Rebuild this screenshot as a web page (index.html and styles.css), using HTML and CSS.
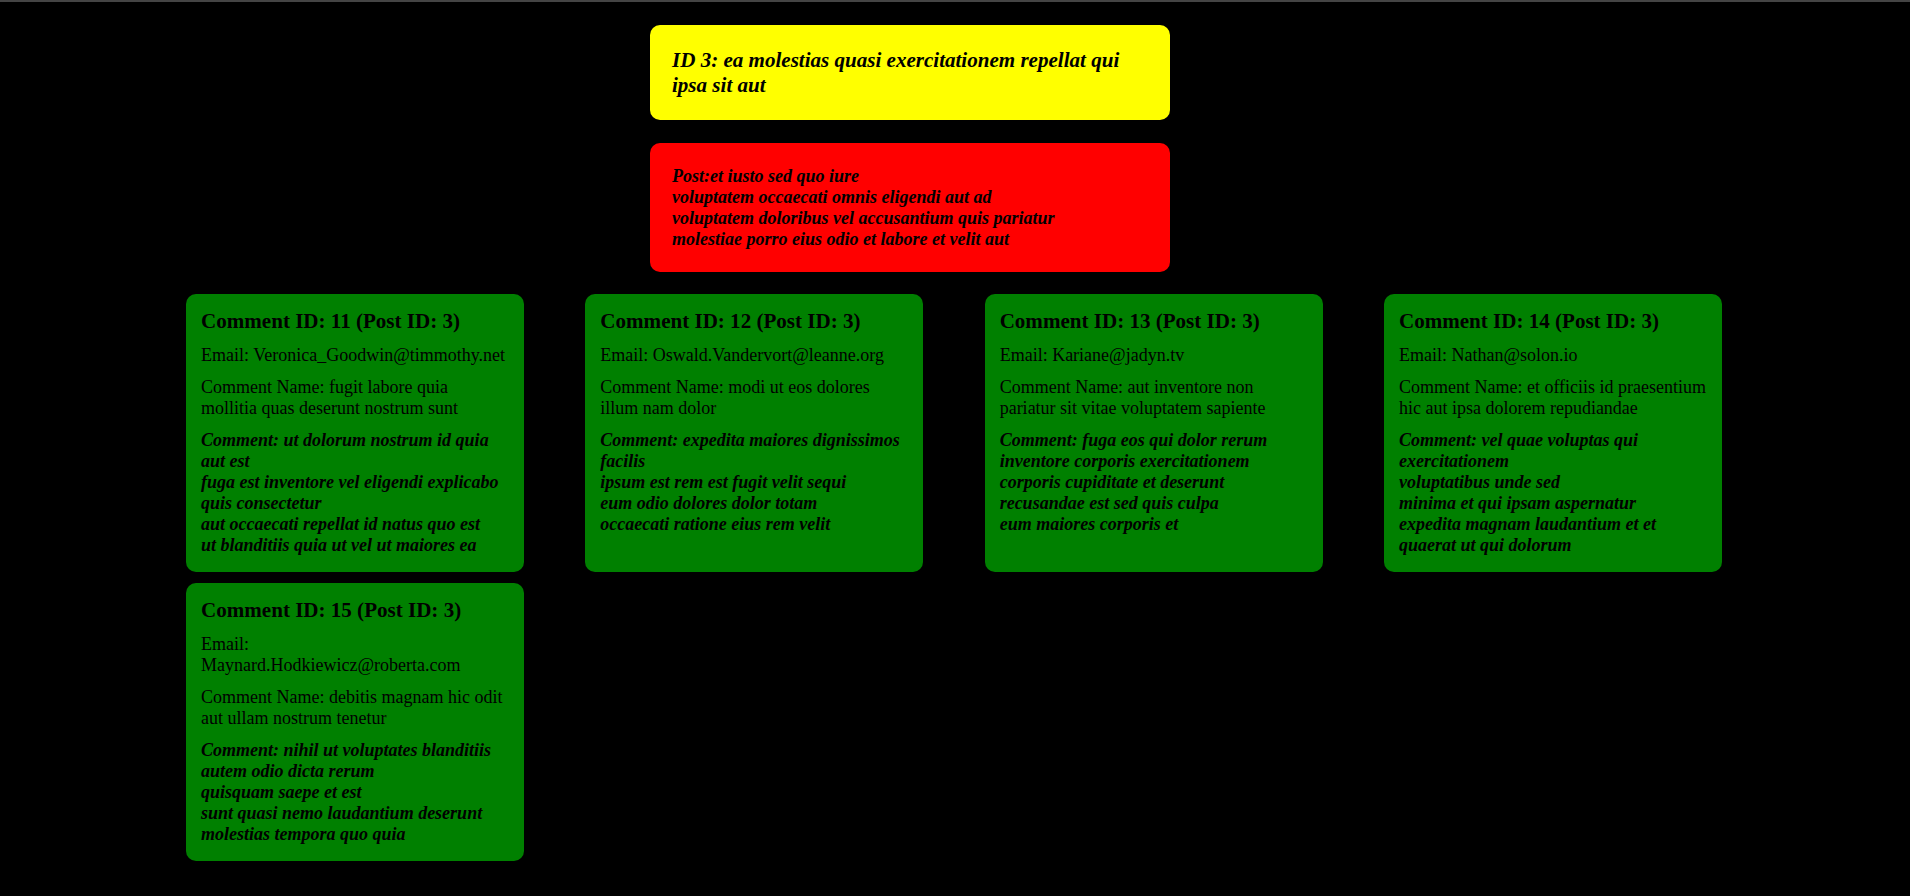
FILE: index.html
```html
<!DOCTYPE html>
<html lang="en">
<head>
<meta charset="utf-8"/>
<meta content="width=device-width, initial-scale=1.0" name="viewport"/>
<title>Post 3</title>
<link rel="stylesheet" href="styles.css">
</head>
<body>
<div class="topline"></div>
<div class="post-wrap">
  <div class="post-title">
    <h3>ID 3: ea molestias quasi exercitationem repellat qui ipsa sit aut</h3>
  </div>
  <div class="post-body">
    <p>Post:et iusto sed quo iure<br>voluptatem occaecati omnis eligendi aut ad<br>voluptatem doloribus vel accusantium quis pariatur<br>molestiae porro eius odio et labore et velit aut</p>
  </div>
</div>

<div class="comments">
  <div class="comment">
    <h3>Comment ID: 11 (Post ID: 3)</h3>
    <p>Email: Veronica_Goodwin@timmothy.net</p>
    <p>Comment Name: fugit labore quia mollitia quas deserunt nostrum sunt</p>
    <p class="body">Comment: ut dolorum nostrum id quia aut est<br>fuga est inventore vel eligendi explicabo quis consectetur<br>aut occaecati repellat id natus quo est<br>ut blanditiis quia ut vel ut maiores ea</p>
  </div>
  <div class="comment">
    <h3>Comment ID: 12 (Post ID: 3)</h3>
    <p>Email: Oswald.Vandervort@leanne.org</p>
    <p>Comment Name: modi ut eos dolores illum nam dolor</p>
    <p class="body">Comment: expedita maiores dignissimos facilis<br>ipsum est rem est fugit velit sequi<br>eum odio dolores dolor totam<br>occaecati ratione eius rem velit</p>
  </div>
  <div class="comment">
    <h3>Comment ID: 13 (Post ID: 3)</h3>
    <p>Email: Kariane@jadyn.tv</p>
    <p>Comment Name: aut inventore non pariatur sit vitae voluptatem sapiente</p>
    <p class="body">Comment: fuga eos qui dolor rerum<br>inventore corporis exercitationem<br>corporis cupiditate et deserunt<br>recusandae est sed quis culpa<br>eum maiores corporis et</p>
  </div>
  <div class="comment">
    <h3>Comment ID: 14 (Post ID: 3)</h3>
    <p>Email: Nathan@solon.io</p>
    <p>Comment Name: et officiis id praesentium hic aut ipsa dolorem repudiandae</p>
    <p class="body">Comment: vel quae voluptas qui exercitationem<br>voluptatibus unde sed<br>minima et qui ipsam aspernatur<br>expedita magnam laudantium et et<br>quaerat ut qui dolorum</p>
  </div>
  <div class="comment">
    <h3>Comment ID: 15 (Post ID: 3)</h3>
    <p>Email: Maynard.Hodkiewicz@roberta.com</p>
    <p>Comment Name: debitis magnam hic odit aut ullam nostrum tenetur</p>
    <p class="body">Comment: nihil ut voluptates blanditiis<br>autem odio dicta rerum<br>quisquam saepe et est<br>sunt quasi nemo laudantium deserunt<br>molestias tempora quo quia</p>
  </div>
</div>
</body>
</html>
```

FILE: styles.css
```css
body {
  margin: 0;
  background-color: #000;
  color: #000;
  font-family: 'Liberation Serif', 'Times New Roman', serif;
  font-size: 18px;
}

.topline {
  height: 2px;
  background-color: #444;
}

.post-wrap {
  width: 520px;
  margin: 23px 0 0 650px;
}

.post-title,
.post-body {
  padding: 22.5px 22px;
  border-radius: 10px;
  font-style: italic;
  font-weight: bold;
}

.post-title {
  background-color: #ffff00;
}

.post-title h3 {
  margin: 0;
  font-size: 1.17em;
}

.post-body {
  margin-top: 23px;
  background-color: #ff0000;
}

.post-body p {
  margin: 0;
}

.comments {
  display: grid;
  grid-template-columns: repeat(4, 338px);
  column-gap: 61.3px;
  row-gap: 11px;
  justify-content: center;
  margin-top: 22px;
  padding-right: 2px;
}

.comment {
  background-color: #008000;
  border-radius: 10px;
  padding: 15px 15.75px 16px 15px;
}

.comment h3 {
  margin: 0 0 11px;
  font-size: 1.17em;
}

.comment p {
  margin: 0 0 11px;
}

.comment p.body {
  margin: 0;
  font-style: italic;
  font-weight: bold;
}
```
